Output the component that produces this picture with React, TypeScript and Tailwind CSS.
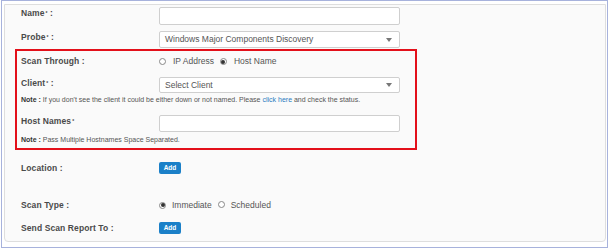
function Label({ text, star = false, colon = true }: { text: string; star?: boolean; colon?: boolean }) {
  return (
    <div className="w-[138px] shrink-0 text-[8.5px] leading-[12px] font-bold text-[#4a4a4a] tracking-[0.1px]">
      {text}
      {star && <sup className="text-[5px] relative -top-[1px] ml-[1px]">*</sup>}
      {colon && <span> :</span>}
    </div>
  );
}

function Radio({ checked }: { checked?: boolean }) {
  return (
    <span className="inline-flex w-[7px] h-[7px] rounded-full border border-[#888] bg-white items-center justify-center">
      {checked && <span className="w-[4px] h-[4px] rounded-full bg-[#333]" />}
    </span>
  );
}

function Select({ value }: { value: string }) {
  return (
    <div className="w-[241px] h-full rounded-[2px] border border-[#cfcfcf] bg-white flex items-center justify-between pl-[5px] pr-[7px] text-[8.5px] text-[#555]">
      <span>{value}</span>
      <svg width="6" height="4" viewBox="0 0 6 4">
        <path d="M0 0 L6 0 L3 4 Z" fill="#777" />
      </svg>
    </div>
  );
}

function AddButton() {
  return (
    <div className="w-[22px] h-[12px] rounded-[2px] bg-[#1b80c8] text-white text-[6.5px] font-bold flex items-center justify-center">
      Add
    </div>
  );
}

function Note({ children }: { children: React.ReactNode }) {
  return (
    <div className="h-[10px] leading-[10px] text-[7px] text-[#555]">
      <span className="font-bold text-[#333]">Note :</span> {children}
    </div>
  );
}

export default function App() {
  return (
    <div className="w-[610px] h-[250px] bg-white pl-[1px] font-['Liberation_Sans',Arial,sans-serif]">
      <div className="w-[607px] h-[248px] border border-[#a7b2dc] pt-[3px] pl-[2px]">
        <div className="w-[602px] h-[238px] border border-[#dedede] rounded-b-[4px] bg-[#fafafa]">
          {/* Name */}
          <div className="flex pl-[16px] mt-[2px] h-[18px]">
            <Label text="Name" star />
            <div className="w-[241px] h-full rounded-[2px] border border-[#cfcfcf] bg-white" />
          </div>

          {/* Probe */}
          <div className="flex pl-[16px] mt-[6px] h-[17px]">
            <Label text="Probe" star />
            <Select value="Windows Major Components Discovery" />
          </div>

          {/* Highlighted box */}
          <div className="ml-[10px] mt-[1px] w-[402px] border-2 border-[#e3101a] pl-[4px] pb-[3px]">
            <div className="flex mt-[4px] h-[12px] items-center">
              <Label text="Scan Through" />
              <div className="flex items-center text-[8.5px] text-[#555]">
                <Radio />
                <span className="ml-[7px]">IP Address</span>
                <span className="ml-[6px]"><Radio checked /></span>
                <span className="ml-[7px]">Host Name</span>
              </div>
            </div>

            <div className="flex mt-[10px] h-[16px]">
              <Label text="Client" star />
              <Select value="Select Client" />
            </div>

            <div className="mt-[2px]">
              <Note>
                If you don't see the client it could be either down or not named. Please{" "}
                <span className="text-[#2a7bc0]">click here</span> and check the status.
              </Note>
            </div>

            <div className="flex mt-[10px] h-[17px]">
              <Label text="Host Names" star colon={false} />
              <div className="w-[241px] h-full rounded-[2px] border border-[#cfcfcf] bg-white" />
            </div>

            <div className="mt-[3px]">
              <Note>Pass Multiple Hostnames Space Separated.</Note>
            </div>
          </div>

          {/* Location */}
          <div className="flex pl-[16px] mt-[12px] h-[12px] items-center">
            <Label text="Location" />
            <AddButton />
          </div>

          {/* Scan Type */}
          <div className="flex pl-[16px] mt-[25px] h-[12px] items-center">
            <Label text="Scan Type" />
            <div className="flex items-center text-[8.5px] text-[#555]">
              <Radio checked />
              <span className="ml-[6px]">Immediate</span>
              <span className="ml-[6px]"><Radio /></span>
              <span className="ml-[6px]">Scheduled</span>
            </div>
          </div>

          {/* Send Scan Report To */}
          <div className="flex pl-[16px] mt-[11px] h-[12px] items-center">
            <Label text="Send Scan Report To" />
            <AddButton />
          </div>
        </div>
      </div>
    </div>
  );
}
